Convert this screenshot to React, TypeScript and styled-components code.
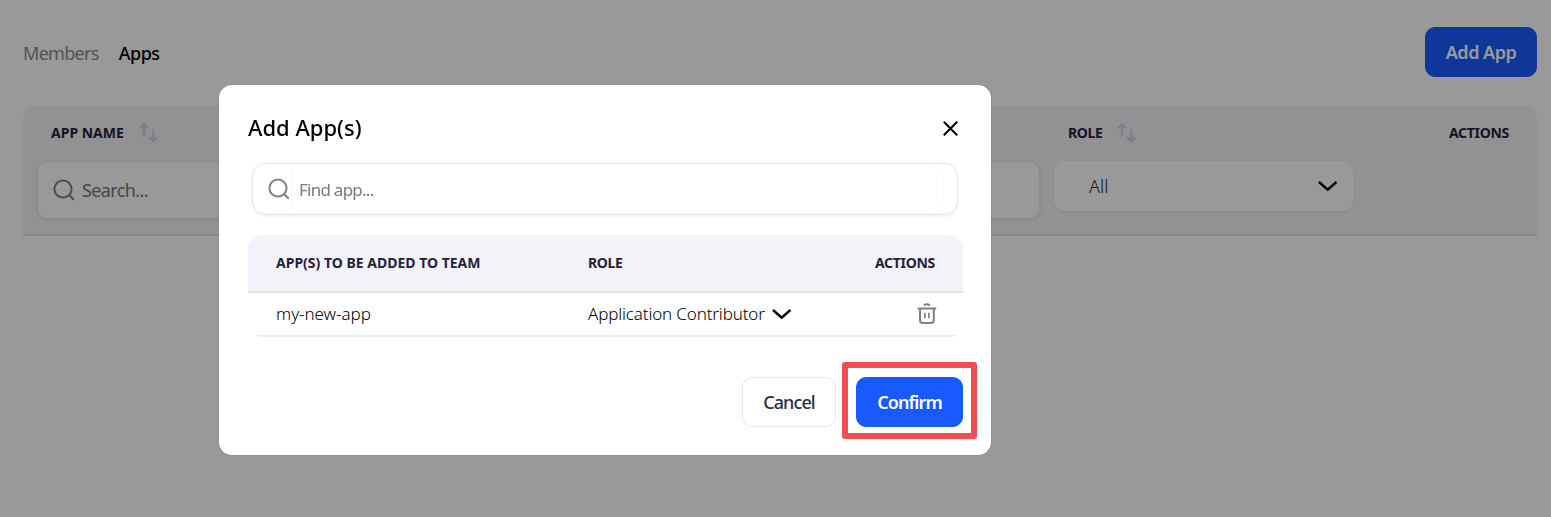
import React from 'react';
import styled, { createGlobalStyle } from 'styled-components';

const GlobalStyle = createGlobalStyle`
  * { box-sizing: border-box; }
  html, body { margin: 0; height: 100%; overflow: hidden; background: #fff; }
  body { font-family: 'Noto Sans', 'Open Sans', sans-serif; color: #000; }
  button, input { font-family: inherit; margin: 0; }
`;

interface TextProps { $size: number; $weight?: number; $color?: string; $track?: number; }

const Text = styled.span<TextProps>`
  font-size: ${p => p.$size}px;
  font-weight: ${p => p.$weight ?? 400};
  color: ${p => p.$color ?? '#000'};
  letter-spacing: ${p => p.$track ?? 0}px;
  line-height: 24px;
  white-space: nowrap;
`;

const Page = styled.main`
  height: 517px;
  padding: 27px 14px 0 23px;
  display: flex;
  flex-direction: column;
  gap: 28px;
`;

const TopBar = styled.header`
  display: flex;
  justify-content: space-between;
  height: 50px;
`;

const Tabs = styled.nav`
  display: flex;
  align-items: center;
  gap: 20px;
  padding-top: 2px;
`;

const Button = styled.button<{ $primary?: boolean; $width: number }>`
  width: ${p => p.$width}px;
  height: 50px;
  padding: 0;
  display: flex;
  align-items: center;
  justify-content: center;
  border-radius: 10px;
  border: 1px solid ${p => (p.$primary ? '#195aff' : '#e4e6ec')};
  background: ${p => (p.$primary ? '#195aff' : '#fff')};
`;

const AppsTable = styled.section`
  height: 131px;
  display: grid;
  grid-template-columns: 1017px 313px 1fr;
  background: #f3f2f6;
  border-bottom: 2px solid #e0e0e4;
  border-radius: 14px 14px 0 0;
`;

const Column = styled.div<{ $end?: boolean }>`
  display: flex;
  flex-direction: column;
  align-items: ${p => (p.$end ? 'flex-end' : 'stretch')};
  padding: 16px ${p => (p.$end ? 28 : 0)}px 0 14px;
`;

const ColumnHead = styled.div<{ $end?: boolean }>`
  height: 24px;
  display: flex;
  align-items: center;
  gap: 15px;
  padding-left: ${p => (p.$end ? 0 : 14)}px;
  margin-bottom: 16px;
`;

const SearchFilter = styled.label`
  height: 58px;
  display: flex;
  align-items: center;
  gap: 7px;
  padding: 0 0 1px 15px;
  background: #fff;
  border: 1px solid #e8e8f0;
  border-radius: 10px;
  box-shadow: 0 1px 3px rgba(60, 60, 90, 0.12);
`;

const RoleFilter = styled.div`
  height: 50px;
  display: flex;
  align-items: center;
  justify-content: space-between;
  padding: 0 15px 1px 35px;
  background: #fff;
  border-radius: 10px;
  box-shadow: 0 1px 2px rgba(60, 60, 120, 0.08);
`;

const Overlay = styled.div`
  position: fixed;
  inset: 0;
  padding: 85px 0 0 219px;
  background: rgba(0, 0, 0, 0.4);
`;

const Dialog = styled.div`
  width: 772px;
  height: 370px;
  padding: 28px 28px 28px 29px;
  display: flex;
  flex-direction: column;
  background: #fff;
  border-radius: 13px;
  box-shadow: 0 0 2px rgba(0, 0, 0, 0.2);
`;

const DialogHead = styled.div`
  height: 31px;
  display: flex;
  align-items: flex-start;
  justify-content: space-between;
  margin-bottom: 19px;
  padding: 2px 5px 0 0;
`;

const CloseButton = styled.span`
  display: flex;
  padding-top: 6px;
`;

const FindBox = styled.label`
  height: 52px;
  margin: 0 5px 20px 4px;
  display: flex;
  align-items: stretch;
  padding: 0 13px 0 15px;
  border: 1px solid #e4e6ec;
  border-radius: 14px;
  box-shadow: 0 1px 3px rgba(60, 60, 90, 0.1);
`;

const FindIcon = styled.span`
  display: flex;
  align-items: center;
  width: 23px;
`;

const FindField = styled.span`
  flex: 1;
  display: flex;
  align-items: center;
  padding: 1px 0 0 7px;
  border-left: 1px solid #f8f8fa;
  border-right: 1px solid #fafafb;
  border-radius: 11px;
`;

const Table = styled.div`
  overflow: hidden;
  border-radius: 14px;
`;

const Row = styled.div<{ $head?: boolean }>`
  display: grid;
  grid-template-columns: 312px 1fr auto;
  align-items: center;
  height: ${p => (p.$head ? 58 : 44)}px;
  padding: 0 28px;
  background: ${p => (p.$head ? '#f3f2f8' : '#fff')};
  border-bottom: 2px solid ${p => (p.$head ? '#e2e2e8' : '#ebebed')};
`;

const RolePicker = styled.div`
  display: flex;
  align-items: center;
  gap: 7px;
`;

const TrashSlot = styled.div`
  display: flex;
  margin-right: -2px;
`;

const Actions = styled.footer`
  display: flex;
  justify-content: flex-end;
  gap: 20px;
  margin-top: 40px;
`;

const Spotlight = styled.div`
  position: relative;
  &::after {
    content: '';
    position: absolute;
    inset: -15px -14px -12px -14px;
    border: 6px solid #ed4e4e;
    border-radius: 3px;
  }
`;

const SearchIcon = () => (
  <svg width="22" height="22" viewBox="0 0 22 22" fill="none" stroke="#808080" strokeWidth="2">
    <circle cx="10" cy="10" r="8.6" />
    <path d="M16 16l4.8 4.8" />
  </svg>
);

const SortIcon = () => (
  <svg width="20" height="22" viewBox="0 0 20 22" fill="none" stroke="#d2d4da" strokeWidth="2.4">
    <path d="M5 14.4V2.4M.9 6.4l4.1-4.2 4.1 4.2M14.3 7v12M10 15.2l4.3 4.2 4.3-4.2" />
  </svg>
);

const Chevron = () => (
  <svg width="20" height="12" viewBox="0 0 20 12" fill="none" stroke="#000" strokeWidth="2.4">
    <path d="M1 2l8.7 7.6L18.4 2" />
  </svg>
);

const CloseIcon = () => (
  <svg width="15" height="15" viewBox="0 0 15 15" fill="none" stroke="#000" strokeWidth="2">
    <path d="M.8.8l13.4 13.4M14.2.8L.8 14.2" />
  </svg>
);

const TrashIcon = () => (
  <svg width="20" height="22" viewBox="0 0 20 22" fill="none" stroke="#808080" strokeWidth="2">
    <path d="M.6 5.5h18.6M6.9 2.4q3-2.2 6 0M3 6v11.2q0 2.8 2.8 2.8h8.2q2.8 0 2.8-2.8V6" />
    <path d="M7.9 9.8v5.4M11.9 9.8v5.4" strokeWidth="1.7" />
  </svg>
);

const Heading = ({ children, track = 0 }: { children: React.ReactNode; track?: number }) => (
  <Text $size={14} $weight={700} $color="#26223c" $track={track}>{children}</Text>
);

export default function App() {
  return (
    <>
      <GlobalStyle />
      <Page>
        <TopBar>
          <Tabs>
            <Text $size={18} $color="#8a8a8a" $track={-0.7}>Members</Text>
            <Text $size={18} $weight={500} $track={-0.5}>Apps</Text>
          </Tabs>
          <Button $primary $width={112}>
            <Text $size={18} $weight={600} $color="#fff" $track={-0.5}>Add App</Text>
          </Button>
        </TopBar>
        <AppsTable>
          <Column>
            <ColumnHead><Heading>APP NAME</Heading><SortIcon /></ColumnHead>
            <SearchFilter><SearchIcon /><Text $size={18} $color="#757575" $track={-0.6}>Search...</Text></SearchFilter>
          </Column>
          <Column>
            <ColumnHead><Heading track={-0.4}>ROLE</Heading><SortIcon /></ColumnHead>
            <RoleFilter><Text $size={18} $weight={300} $color="#26223c">All</Text><Chevron /></RoleFilter>
          </Column>
          <Column $end>
            <ColumnHead $end><Heading track={-0.3}>ACTIONS</Heading></ColumnHead>
          </Column>
        </AppsTable>
      </Page>
      <Overlay>
        <Dialog role="dialog">
          <DialogHead>
            <Text $size={22} $weight={500}>Add App(s)</Text>
            <CloseButton><CloseIcon /></CloseButton>
          </DialogHead>
          <FindBox>
            <FindIcon><SearchIcon /></FindIcon>
            <FindField><Text $size={17} $weight={400} $color="#7a7a7a" $track={-0.75}>Find app...</Text></FindField>
          </FindBox>
          <Table>
            <Row $head>
              <Heading>APP(S) TO BE ADDED TO TEAM</Heading>
              <Heading track={-0.4}>ROLE</Heading>
              <Heading track={-0.3}>ACTIONS</Heading>
            </Row>
            <Row>
              <Text $size={17} $weight={350} $track={-0.05}>my-new-app</Text>
              <RolePicker>
                <Text $size={17} $weight={350} $track={-0.15}>Application Contributor</Text>
                <Chevron />
              </RolePicker>
              <TrashSlot><TrashIcon /></TrashSlot>
            </Row>
          </Table>
          <Actions>
            <Button $width={94}><Text $size={18} $weight={500} $color="#2a2f45" $track={-0.9}>Cancel</Text></Button>
            <Spotlight>
              <Button $primary $width={107}><Text $size={18} $weight={600} $color="#fff" $track={-0.9}>Confirm</Text></Button>
            </Spotlight>
          </Actions>
        </Dialog>
      </Overlay>
    </>
  );
}
